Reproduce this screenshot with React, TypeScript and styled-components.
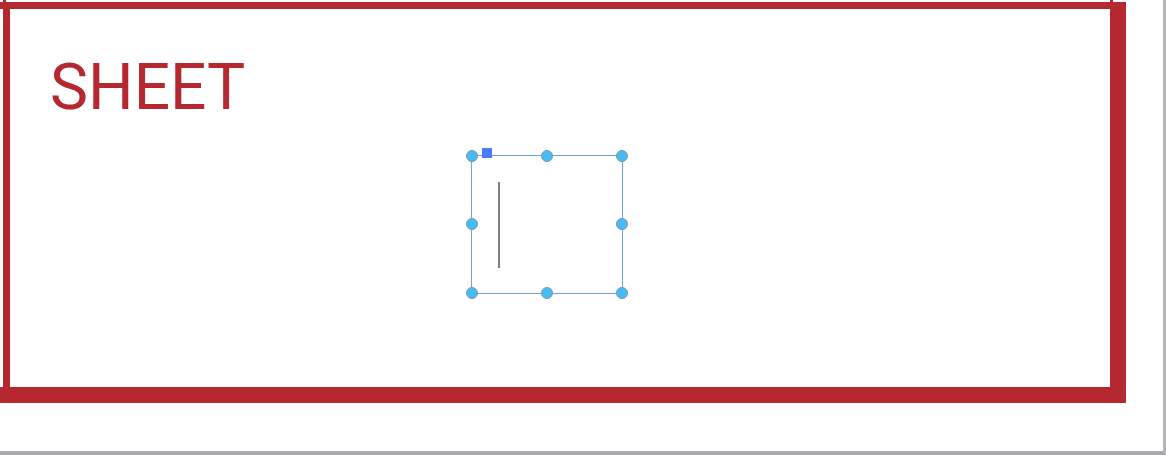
import React from "react";
import styled, { createGlobalStyle } from "styled-components";

const RED = "#b5282f";

const GlobalStyle = createGlobalStyle`
  html, body { margin: 0; padding: 0; background: #ffffff; }
  body { font-family: Roboto, "Liberation Sans", sans-serif; }
`;

const Page = styled.div`
  box-sizing: border-box;
  width: 1166px;
  height: 455px;
  background: #ffffff;
  border-right: 3px solid #b6b6ba;
  border-bottom: 4px solid #a9a9ae;
  padding: 2px 0 0 3px;
  overflow: hidden;
`;

const Sheet = styled.div`
  position: relative;
  box-sizing: border-box;
  width: 1123px;
  height: 401px;
  border-style: solid;
  border-color: ${RED};
  border-width: 7px 16px 16px 7px;
  padding: 47px 40px;

  &::before {
    content: "";
    position: absolute;
    left: -10px;
    top: -7px;
    width: 3px;
    height: 7px;
    background: ${RED};
    box-shadow: 3px -2px 0 0 ${RED}, 1110px -2px 0 0 ${RED};
  }

  &::after {
    content: "";
    position: absolute;
    left: -10px;
    bottom: -16px;
    width: 3px;
    height: 16px;
    background: ${RED};
  }
`;

const Title = styled.h1`
  margin: 0;
  font-family: Roboto, "Liberation Sans", sans-serif;
  font-weight: 400;
  font-size: 64px;
  line-height: 64px;
  color: ${RED};
  letter-spacing: 0;
`;

const TextFrame = styled.div`
  position: absolute;
  left: 461px;
  top: 146px;
  width: 152px;
  height: 139px;
  box-sizing: border-box;
  border: 1px solid #6f9df0;
`;

const Handle = styled.span<{ $x: string; $y: string }>`
  position: absolute;
  left: ${(p) => p.$x};
  top: ${(p) => p.$y};
  width: 12px;
  height: 12px;
  margin: -6.5px 0 0 -6.5px;
  box-sizing: border-box;
  border-radius: 50%;
  background: #44bdf6;
  border: 1px solid #8492a0;
`;

const Anchor = styled.span`
  position: absolute;
  left: 10px;
  top: -8px;
  width: 10px;
  height: 10px;
  background: #4a7dfd;
`;

const Caret = styled.span`
  position: absolute;
  left: 26px;
  top: 26px;
  width: 2px;
  height: 86px;
  background: #7f7f7f;
`;

const handles: Array<[string, string]> = [
  ["0px", "0px"],
  ["50%", "0px"],
  ["100%", "0px"],
  ["0px", "50%"],
  ["100%", "50%"],
  ["0px", "100%"],
  ["50%", "100%"],
  ["100%", "100%"],
];

export default function App() {
  return (
    <>
      <GlobalStyle />
      <Page>
        <Sheet>
          <Title>SHEET</Title>
          <TextFrame>
            <Caret />
            {handles.map(([x, y], i) => (
              <Handle key={i} $x={x} $y={y} />
            ))}
            <Anchor />
          </TextFrame>
        </Sheet>
      </Page>
    </>
  );
}
